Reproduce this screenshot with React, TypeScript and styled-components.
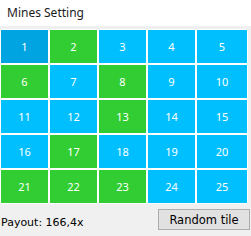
import React from 'react'
import styled, { createGlobalStyle } from 'styled-components'

const GlobalStyle = createGlobalStyle`
  html, body {
    margin: 0;
    padding: 0;
    background: #f0f0f0;
  }
`

const greenTiles = [2, 6, 8, 13, 17, 21, 22, 23]
const activeTile = 1

const App: React.FC = () => {
  const tiles = Array.from({ length: 25 }, (_, i) => i + 1)

  return (
    <Window>
      <GlobalStyle />
      <TitleBar>Mines Setting</TitleBar>
      <Body>
        <Grid>
          {tiles.map((n) => (
            <Tile
              key={n}
              kind={n === activeTile ? 'active' : greenTiles.includes(n) ? 'mine' : 'free'}
            >
              {n}
            </Tile>
          ))}
        </Grid>
        <Footer>
          <Payout>Payout: 166,4x</Payout>
          <Button type="button">Random tile</Button>
        </Footer>
      </Body>
    </Window>
  )
}

export default App

const Window = styled.div`
  width: 251px;
  height: 236px;
  background: #f0f0f0;
  overflow: hidden;
`
const TitleBar = styled.div`
  height: 26px;
  background: #ffffff;
  color: #1b1b1b;
  font-family: 'Noto Sans', 'Open Sans', sans-serif;
  font-size: 12px;
  line-height: 26px;
  padding-left: 7px;
  box-sizing: border-box;
`
const Body = styled.div`
  padding-top: 3px;
`
const Grid = styled.div`
  display: grid;
  grid-template-columns: 47px 47px 47px 47px 50px;
  grid-auto-rows: 33px;
  gap: 2px;
  padding: 1px;
  width: fit-content;
  background: #ffffff;
`
const Tile = styled.div<{ kind: 'active' | 'mine' | 'free' }>`
  display: flex;
  align-items: center;
  justify-content: center;
  background: ${(props) => (props.kind === 'active'
    ? '#00a4e0'
    : props.kind === 'mine'
      ? '#32cd32'
      : '#00bfff')};
  color: #ffffff;
  font-family: 'Noto Sans', 'Open Sans', sans-serif;
  font-size: 11px;
`
const Footer = styled.div`
  display: flex;
  justify-content: space-between;
  align-items: center;
  padding: 5px 1px 0 1px;
`
const Payout = styled.span`
  font-family: 'DejaVu Sans', 'Liberation Sans', sans-serif;
  font-size: 11px;
  color: #000000;
  padding-top: 6px;
`
const Button = styled.button`
  width: 92px;
  height: 21px;
  margin: 0;
  padding: 0;
  border: 1px solid #adadad;
  background: #e1e1e1;
  color: #000000;
  font-family: 'DejaVu Sans', 'Liberation Sans', sans-serif;
  font-size: 11.5px;
`
